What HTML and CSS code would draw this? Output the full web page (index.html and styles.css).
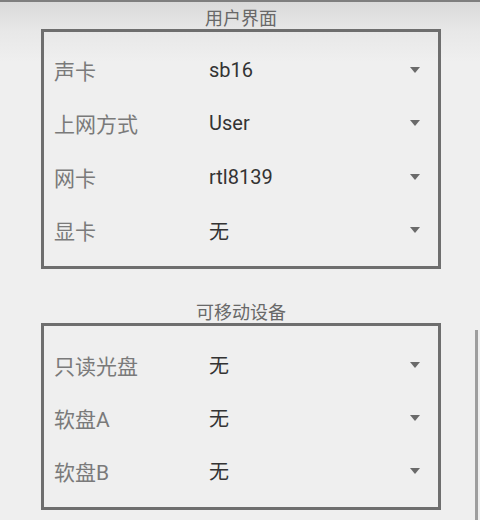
FILE: index.html
```html
<!DOCTYPE html>
<html lang="zh-CN">
<head>
<meta charset="utf-8">
<link rel="stylesheet" href="styles.css">
</head>
<body>
<div class="page">
  <div class="section-title first">用户界面</div>
  <div class="box box-ui">
    <div class="row"><span class="label">声卡</span><span class="value">sb16</span><span class="arrow"></span></div>
    <div class="row"><span class="label">上网方式</span><span class="value">User</span><span class="arrow"></span></div>
    <div class="row"><span class="label">网卡</span><span class="value">rtl8139</span><span class="arrow"></span></div>
    <div class="row"><span class="label">显卡</span><span class="value">无</span><span class="arrow"></span></div>
  </div>
  <div class="section-title second">可移动设备</div>
  <div class="box box-dev">
    <div class="row"><span class="label">只读光盘</span><span class="value">无</span><span class="arrow"></span></div>
    <div class="row"><span class="label">软盘A</span><span class="value">无</span><span class="arrow"></span></div>
    <div class="row"><span class="label">软盘B</span><span class="value">无</span><span class="arrow"></span></div>
  </div>
  <div class="scrollbar"></div>
</div>
</body>
</html>
```
FILE: styles.css
```css
html, body {
  margin: 0;
  padding: 0;
}
body {
  width: 480px;
  height: 520px;
  overflow: hidden;
  background: #efefef;
  font-family: Roboto, "Noto Sans CJK SC", sans-serif;
}
.page {
  position: relative;
  height: 520px;
  border-top: 2px solid #7e7e7e;
  box-sizing: border-box;
  background: linear-gradient(to bottom, #d9d9d9 0px, #e8e8e8 30px, #efefef 60px, #efefef 100%);
}
.section-title {
  text-align: center;
  font-size: 18px;
  color: #686868;
  font-family: "Noto Sans CJK SC", sans-serif;
  line-height: 20px;
  padding-left: 2px;
}
.section-title.first {
  padding-top: 5px;
  height: 22px;
}
.section-title.second {
  margin-top: 32px;
  height: 22px;
}
.box {
  margin-left: 41px;
  width: 400px;
  box-sizing: border-box;
  border: 3px solid #6e6e6e;
  display: flex;
  flex-direction: column;
  padding-left: 10px;
  padding-right: 18px;
}
.box-ui {
  height: 240px;
  padding-top: 11px;
}
.box-dev {
  height: 187px;
  padding-top: 12px;
}
.box-ui .row { height: 53.5px; }
.box-dev .row { height: 53px; }
.row {
  display: flex;
  align-items: center;
  flex: none;
}
.label {
  width: 155px;
  font-size: 21px;
  color: #7a7a7a;
  font-family: Roboto, "Noto Sans CJK SC", sans-serif;
}
.value {
  flex: 1;
  font-size: 20px;
  color: #333333;
}
.arrow {
  width: 0;
  height: 0;
  border-left: 5.5px solid transparent;
  border-right: 5.5px solid transparent;
  border-top: 6px solid #6a6a6a;
}
.scrollbar {
  position: absolute;
  left: 475px;
  top: 328px;
  width: 3px;
  height: 200px;
  background: #9e9e9e;
}
```
